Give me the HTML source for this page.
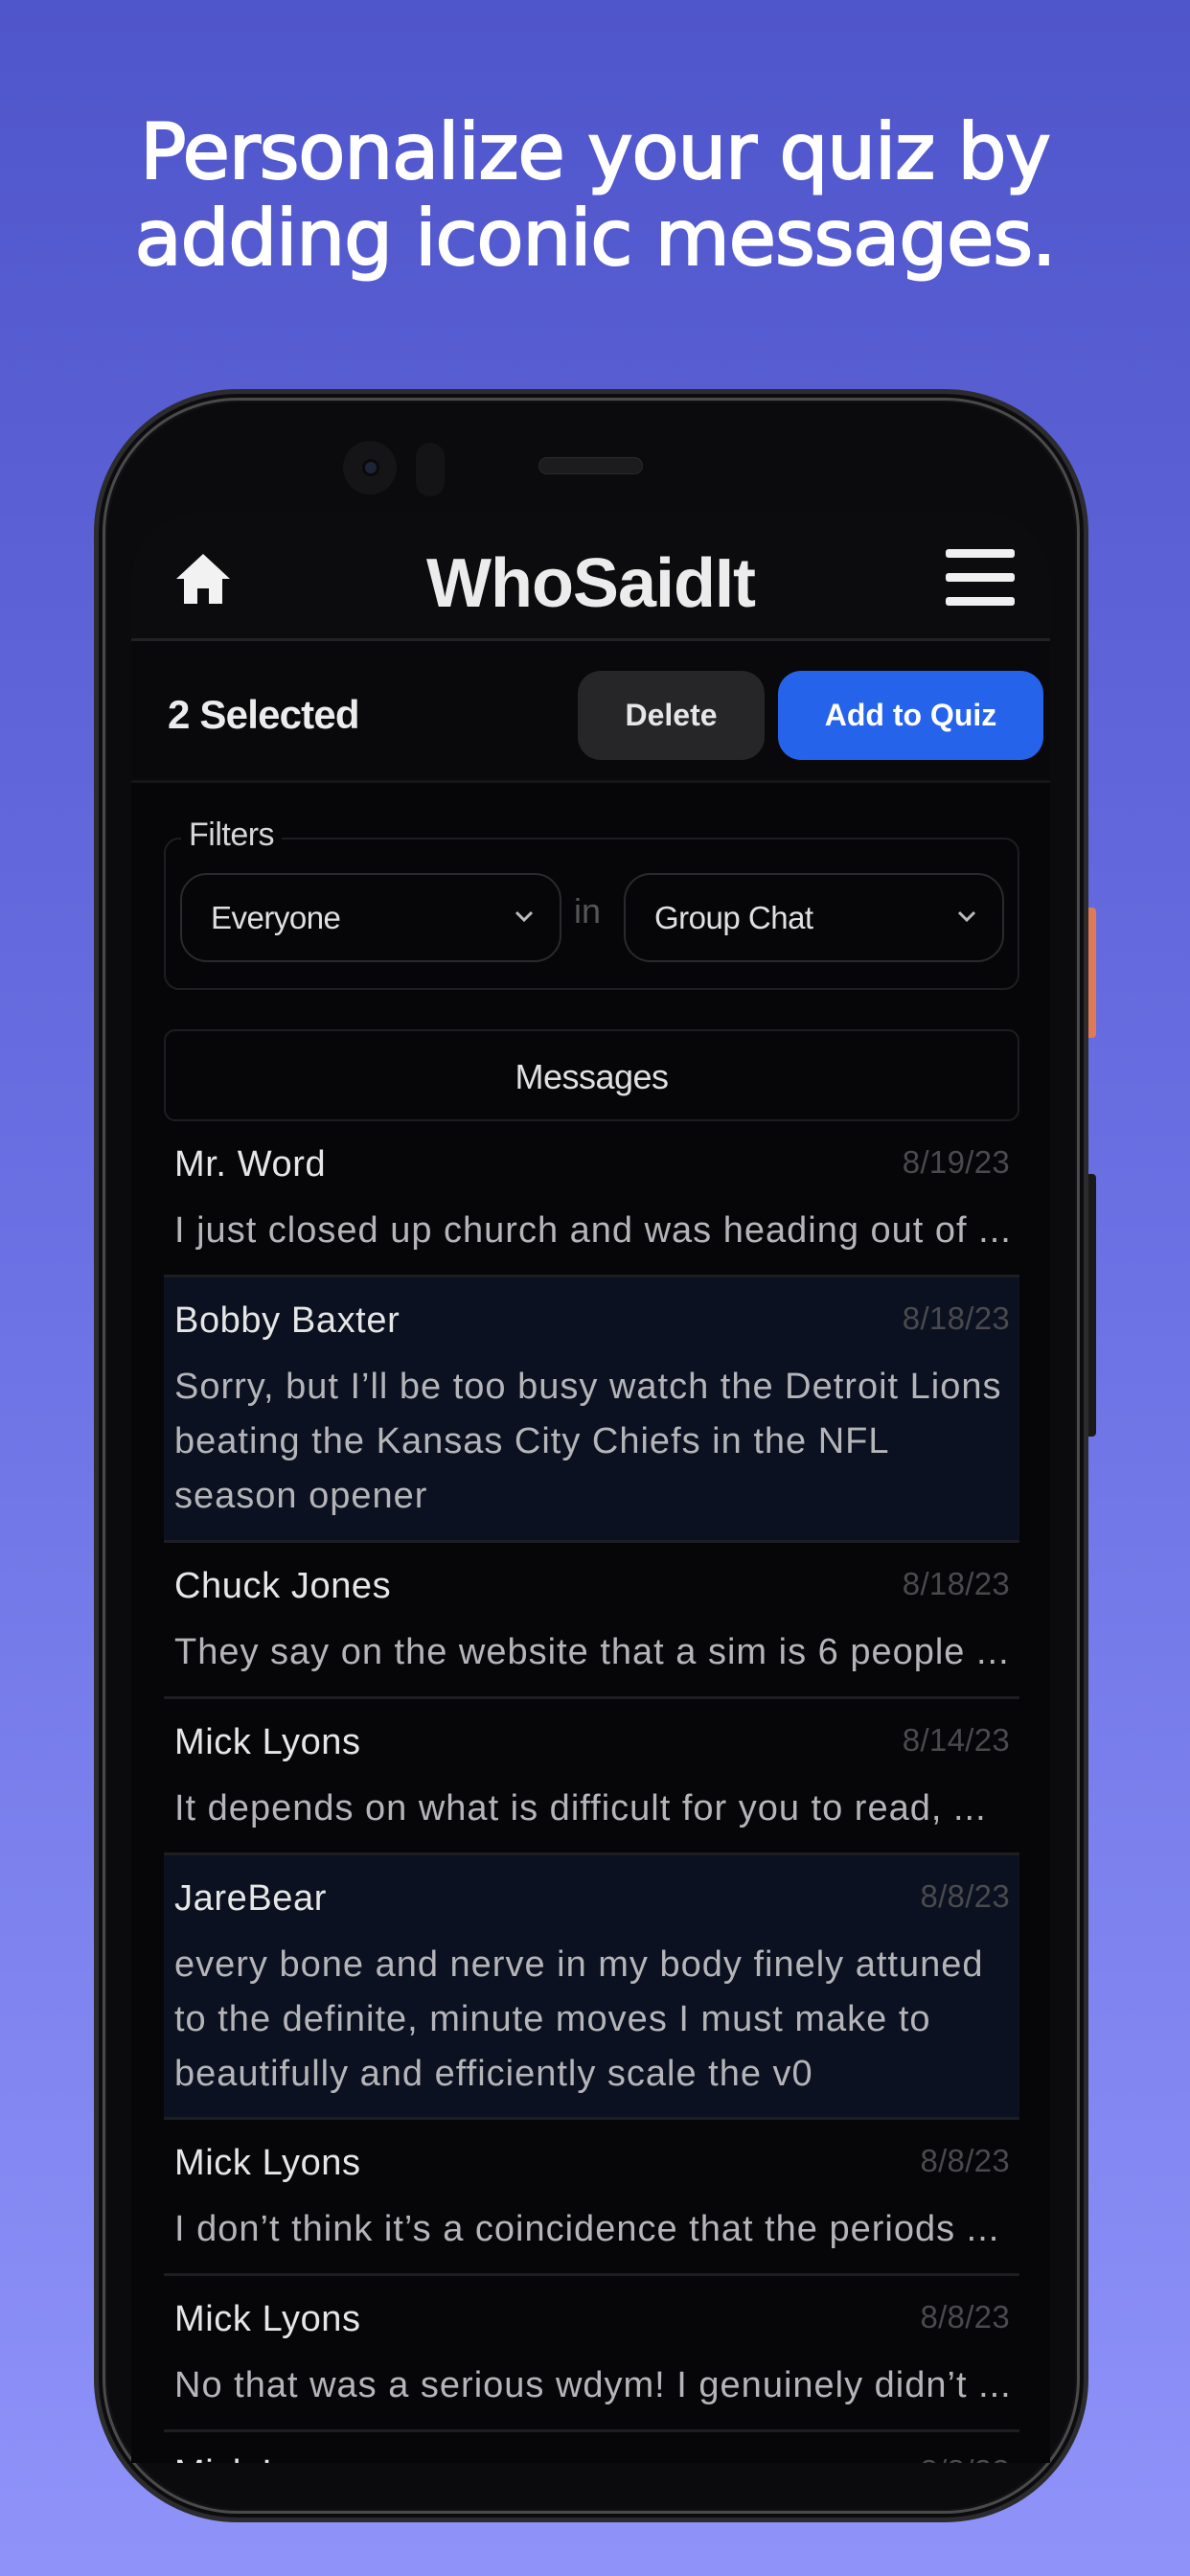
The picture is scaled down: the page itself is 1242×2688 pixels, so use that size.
<!DOCTYPE html>
<html><head><meta charset="utf-8"><style>
*{margin:0;padding:0;box-sizing:border-box}
body{width:1242px;height:2688px;overflow:hidden;background:linear-gradient(180deg,#4f55ca 0%,#6c72e4 50%,#8f93f9 100%);font-family:"Liberation Sans",sans-serif;position:relative}
.t{position:absolute;left:0;width:1242px;text-align:center;color:#fff;font-family:"DejaVu Sans","Liberation Sans",sans-serif;font-size:80px;line-height:90px;top:114px;letter-spacing:-1px;-webkit-text-stroke:2px #fff}
.phone{position:absolute;left:98px;top:406px;width:1038px;height:2226px;border-radius:150px;background:#111113;border:5px solid #2c2c2e;box-shadow:inset 0 0 0 4px #0c0c0c,inset 0 0 0 7px #4a4a4c}
.bez{position:absolute;left:112px;top:420px;width:1010px;height:2198px;border-radius:138px;background:#0b0b0d}
.screen{position:absolute;left:137px;top:534px;width:959px;height:2036px;border-radius:70px 70px 0 0;background:#060608;overflow:hidden}
.side1{position:absolute;left:1136px;top:947px;width:8px;height:136px;background:#e07a55;border-radius:0 4px 4px 0}
.side2{position:absolute;left:1136px;top:1225px;width:8px;height:274px;background:#1a1a1a;border-radius:0 4px 4px 0}
.a{position:absolute}
.row{position:absolute;left:34px;width:893px;border-bottom:3px solid #1d1e22}
.row.h{background:#0b1120}
.nm{position:absolute;left:11px;top:24px;color:#e6e6e6;font-size:38px;letter-spacing:0.6px}
.dt{position:absolute;right:10px;top:24px;color:#4a4a4e;font-size:33px;letter-spacing:0.3px}
.msg{position:absolute;left:11px;width:885px;color:#b5b5b9;font-size:38px;letter-spacing:1px;line-height:57px;white-space:nowrap;overflow:hidden}
.sel{position:absolute;top:911px;height:93px;border:2px solid #2a2a2e;border-radius:28px;color:#e0e0e0;font-size:33px;line-height:89px;padding-left:30px;letter-spacing:-0.5px}
.sel svg{position:absolute;right:26px;top:36px}
</style></head><body>
<div class="t">Personalize your quiz by<br>adding iconic messages.</div>
<div class="phone"></div>
<div class="bez"></div>
<div class="side1"></div><div class="side2"></div>
<div class="a" style="left:358px;top:460px;width:56px;height:56px;border-radius:50%;background:#151517"></div>
<div class="a" style="left:378px;top:479px;width:18px;height:18px;border-radius:50%;background:#1f2538;border:3px solid #0a0a0a"></div>
<div class="a" style="left:434px;top:462px;width:30px;height:56px;border-radius:15px;background:#141416"></div>
<div class="a" style="left:562px;top:477px;width:109px;height:18px;border-radius:9px;background:#1c1c1e;border:1px solid #2a2a2c"></div>
<div class="screen">
 <div class="a" style="left:0;top:0;width:959px;height:134px;background:#0c0c0e"></div>
 <svg class="a" style="left:45px;top:42px" width="60" height="56" viewBox="0 0 60 56"><path d="M30 2 L2 28 L10 28 L10 54 L24 54 L24 38 L36 38 L36 54 L50 54 L50 28 L58 28 Z" fill="#f2f2f2"/></svg>
 <div class="a" style="left:0;width:959px;top:34px;text-align:center;color:#ececec;font-size:72px;font-weight:bold;letter-spacing:-1px">WhoSaidIt</div>
 <div class="a" style="left:850px;top:39px;width:72px;height:9px;border-radius:3px;background:#f0f0f0"></div>
 <div class="a" style="left:850px;top:64px;width:72px;height:9px;border-radius:3px;background:#f0f0f0"></div>
 <div class="a" style="left:850px;top:89px;width:72px;height:9px;border-radius:3px;background:#f0f0f0"></div>
 <div class="a" style="left:0;top:132px;width:959px;height:3px;background:#222226"></div>
 <div class="a" style="left:0;top:135px;width:959px;height:145px;background:#09090b"></div>
 <div class="a" style="left:38px;top:188px;color:#ececec;font-size:42px;font-weight:bold;letter-spacing:-0.8px">2 Selected</div>
 <div class="a" style="left:466px;top:166px;width:195px;height:93px;border-radius:24px;background:#262629;color:#e6e6e6;font-size:32px;font-weight:bold;text-align:center;line-height:93px">Delete</div>
 <div class="a" style="left:675px;top:166px;width:277px;height:93px;border-radius:24px;background:#2563eb;color:#fff;font-size:32px;font-weight:bold;text-align:center;line-height:93px">Add to Quiz</div>
 <div class="a" style="left:0;top:280px;width:959px;height:3px;background:#151517"></div>
 <div class="a" style="left:34px;top:340px;width:893px;height:159px;border:2px solid #1e1e22;border-radius:16px"></div>
 <div class="a" style="left:52px;top:318px;padding:0 8px;background:#060608;color:#d6d6d6;font-size:34px;letter-spacing:-0.5px">Filters</div>
 <div class="sel" style="left:51px;width:398px;top:377px">Everyone<svg width="22" height="14" viewBox="0 0 22 14"><path d="M3 3 L11 11 L19 3" stroke="#bbb" stroke-width="3" fill="none"/></svg></div>
 <div class="a" style="left:462px;top:396px;color:#555;font-size:36px">in</div>
 <div class="sel" style="left:514px;width:397px;top:377px">Group Chat<svg width="22" height="14" viewBox="0 0 22 14"><path d="M3 3 L11 11 L19 3" stroke="#bbb" stroke-width="3" fill="none"/></svg></div>
 <div class="a" style="left:34px;top:540px;width:893px;height:96px;border:2px solid #1e1e22;border-radius:12px;color:#e0e0e0;font-size:36px;text-align:center;line-height:96px;letter-spacing:-0.5px">Messages</div>

 <div class="row" style="top:636px;height:163px"><div class="nm">Mr. Word</div><div class="dt">8/19/23</div><div class="msg" style="top:86px">I just closed up church and was heading out of ...</div></div>
 <div class="row h" style="top:799px;height:277px"><div class="nm">Bobby Baxter</div><div class="dt">8/18/23</div><div class="msg" style="top:86px;white-space:normal">Sorry, but I’ll be too busy watch the Detroit Lions<br>beating the Kansas City Chiefs in the NFL<br>season opener</div></div>
 <div class="row" style="top:1076px;height:163px"><div class="nm">Chuck Jones</div><div class="dt">8/18/23</div><div class="msg" style="top:86px">They say on the website that a sim is 6 people ...</div></div>
 <div class="row" style="top:1239px;height:163px"><div class="nm">Mick Lyons</div><div class="dt">8/14/23</div><div class="msg" style="top:86px">It depends on what is difficult for you to read, ...</div></div>
 <div class="row h" style="top:1402px;height:276px"><div class="nm">JareBear</div><div class="dt">8/8/23</div><div class="msg" style="top:86px;white-space:normal">every bone and nerve in my body finely attuned<br>to the definite, minute moves I must make to<br>beautifully and efficiently scale the v0</div></div>
 <div class="row" style="top:1678px;height:163px"><div class="nm">Mick Lyons</div><div class="dt">8/8/23</div><div class="msg" style="top:86px">I don’t think it’s a coincidence that the periods ...</div></div>
 <div class="row" style="top:1841px;height:163px"><div class="nm">Mick Lyons</div><div class="dt">8/8/23</div><div class="msg" style="top:86px">No that was a serious wdym! I genuinely didn’t ...</div></div>
 <div class="row" style="top:2004px;height:163px;border:none"><div class="nm" style="top:22px">Mick Lyons</div><div class="dt" style="top:22px">8/8/23</div></div>
</div>
</body></html>
